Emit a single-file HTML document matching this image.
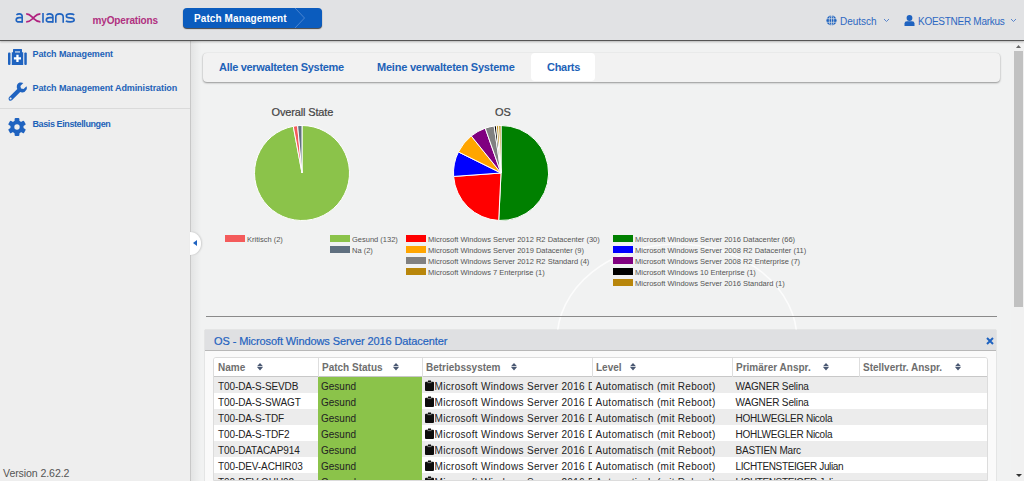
<!DOCTYPE html>
<html><head><meta charset="utf-8">
<style>
*{box-sizing:border-box;margin:0;padding:0}
html,body{width:1024px;height:481px;overflow:hidden;background:#f1f2f2;font-family:"Liberation Sans",sans-serif;position:relative}
.a{position:absolute;white-space:nowrap}
#hdr{position:absolute;left:0;top:0;width:1024px;height:41px;background:#e1e2e4;border-bottom:1px solid #555;box-shadow:0 1px 2px rgba(0,0,0,.25);z-index:5}
#side{position:absolute;left:0;top:40px;width:191px;height:441px;background:#eeeeee;border-right:1px solid #c8c8c8}
#sideshadow{position:absolute;left:191px;top:40px;width:10px;height:441px;background:linear-gradient(to right,rgba(0,0,0,.06),rgba(0,0,0,0))}
.st{position:absolute;left:32.5px;font-size:9px;font-weight:bold;color:#1d62b8;letter-spacing:-0.1px;white-space:nowrap;line-height:11px}
.tab{position:absolute;font-size:11px;font-weight:bold;color:#1d62b8;letter-spacing:-0.3px;white-space:nowrap;line-height:13px}

#tabbar{position:absolute;left:203px;top:53px;width:797px;height:28.5px;background:#f2f2f2;border-radius:4px;box-shadow:0 1px 2px rgba(0,0,0,.38),0 0 1px rgba(0,0,0,.12)}
.ttl{position:absolute;font-size:11px;color:#444;line-height:13px;white-space:nowrap;letter-spacing:-0.15px;-webkit-text-stroke:0.2px #444}
.lg{position:absolute;font-size:7.5px;color:#555;line-height:10px;white-space:nowrap}
#panel{position:absolute;left:205px;top:330px;width:791px;height:151px;background:#fafafa;box-shadow:0 0 1px rgba(0,0,0,.3)}
#phead{position:absolute;left:0;top:0;width:791px;height:21px;background:#dfe0e2;border-bottom:1px solid #b8b8b8}
#table{position:absolute;left:213px;top:357px;width:775px;height:124px;background:#fff;border:1px solid #dcdcdc;border-radius:3px 3px 0 0;overflow:hidden}
#thead{position:absolute;left:0;top:0;width:774px;height:19px;background:#fff;border-bottom:1px solid #c8c8c8}
.hc{position:absolute;top:4px;font-size:10px;font-weight:bold;color:#6e6e6e;line-height:12px;white-space:nowrap}
.row{position:absolute;left:0;width:774px;height:16px}
.c{position:absolute;top:4px;font-size:10px;color:#222;line-height:12px;white-space:nowrap}
.green{position:absolute;left:104px;top:0;width:104px;height:16px;background:#8bc34a}
#handle{position:absolute;left:190px;top:232px;width:11px;height:23px;background:#fff;border-radius:0 12px 12px 0;box-shadow:1px 0 2px rgba(0,0,0,.15)}
#sb{position:absolute;left:1011px;top:41px;width:13px;height:440px;background:#f1f1f1}
#thumb{position:absolute;left:3px;top:10px;width:9px;height:256px;background:#c1c1c1}
</style></head><body>
<div id="hdr">
  <svg class="a" style="left:0;top:0" width="80" height="40" viewBox="0 0 80 40">
    <g fill="none" stroke="#1f63c0" stroke-width="1.6" stroke-linecap="butt">
      <path d="M16.4 14.8Q17.6 13.9 19.3 13.9Q22.2 13.9 22.2 16.6V22.7"/><path d="M22.2 17.6H19.2Q16.2 17.6 16.2 19.9Q16.2 21.9 19.2 21.9H22.2"/>
      <line x1="43" y1="13.1" x2="43" y2="22.7"/>
      <path d="M46.6 14.8Q47.8 13.9 49.5 13.9Q52.9 13.9 52.9 16.6V22.7"/><path d="M52.9 17.6H49.6Q46.3 17.6 46.3 19.9Q46.3 21.9 49.6 21.9H52.9"/>
      <path d="M55.8 22.7V17Q55.8 13.9 59.5 13.9Q63.2 13.9 63.2 17V22.7"/>
      <path d="M74.2 14.9Q73.2 13.9 70 13.9Q66.3 13.9 66.3 15.9Q66.3 17.8 70 17.9Q74.2 18.1 74.2 20.1Q74.2 21.9 70.2 21.9Q67 21.9 65.9 20.9"/>
    </g>
    <g fill="none" stroke="#b0207e" stroke-width="1.7">
      <path d="M26.2 13.9C30 13.9 31 16 33.2 18.1C35.4 20.2 36.5 21.9 40.4 21.9"/><path d="M26.2 21.9C30 21.9 31 20.2 33.2 18.1C35.4 16 36.5 13.9 40.4 13.9"/>
    </g>
  </svg>
  <div class="a" style="left:92.5px;top:15px;font-size:10px;font-weight:bold;color:#b0307f;letter-spacing:-0.15px;line-height:12px">myOperations</div>
  <div class="a" style="left:183px;top:8px;width:139px;height:20px;background:#0b5cbe;border-radius:4px;box-shadow:0 1px 1px rgba(0,0,0,.7)">
    <div class="a" style="left:11px;top:5px;font-size:10px;font-weight:bold;color:#fff;letter-spacing:0.1px;line-height:12px">Patch Management</div>
    <svg class="a" style="left:111px;top:0" width="12" height="20"><path d="M1 0L10.5 10L1 20" fill="none" stroke="#5a8fd6" stroke-width="0.8"/></svg>
  </div>
  <svg class="a" style="left:826px;top:15px" width="11" height="11" viewBox="0 0 11 11">
    <circle cx="5.5" cy="5.5" r="5.1" fill="#1f63c0"/>
    <g stroke="#e1e2e4" stroke-width="0.7" fill="none"><ellipse cx="5.5" cy="5.5" rx="2.2" ry="5"/><line x1="0" y1="3.7" x2="11" y2="3.7"/><line x1="0" y1="7.3" x2="11" y2="7.3"/><line x1="5.5" y1="0" x2="5.5" y2="11"/></g>
  </svg>
  <div class="a" style="left:840px;top:15.5px;font-size:10px;color:#2d68c2;line-height:12px">Deutsch</div>
  <svg class="a" style="left:883px;top:18px" width="7" height="5"><path d="M1 1L3.5 3.5L6 1" fill="none" stroke="#4a7cc8" stroke-width="0.9"/></svg>
  <svg class="a" style="left:904px;top:15px" width="11" height="11" viewBox="0 0 11 11">
    <circle cx="5.5" cy="3" r="2.9" fill="#1f63c0"/><path d="M0.5 11V8.6Q0.5 6.3 3 6.3H8Q10.5 6.3 10.5 8.6V11Z" fill="#1f63c0"/>
  </svg>
  <div class="a" style="left:918px;top:15.5px;font-size:10px;color:#2d68c2;letter-spacing:-0.27px;line-height:12px">KOESTNER Markus</div>
  <svg class="a" style="left:1010px;top:18px" width="7" height="5"><path d="M1 1L3.5 3.5L6 1" fill="none" stroke="#4a7cc8" stroke-width="0.9"/></svg>
</div>
<div id="side">
  <svg class="a" style="left:8px;top:8.7px" width="19" height="16.2" viewBox="0 0 19 16.2">
    <path d="M5 0.6Q5 0 5.6 0H13.4Q14 0 14 0.6V3.3H15.2V16H3.8V3.3H5Z" fill="#1f63c0"/>
    <rect x="7" y="2.4" width="5" height="1.1" fill="#eeeeee"/>
    <rect x="0" y="3.5" width="2.5" height="12.5" rx="1" fill="#1f63c0"/>
    <rect x="16.3" y="3.5" width="2.5" height="12.5" rx="1" fill="#1f63c0"/>
    <path d="M8.3 5.8H10.6V8.2H13V10.5H10.6V12.9H8.3V10.5H5.9V8.2H8.3Z" fill="#fff"/>
  </svg>
  <div class="st" style="top:8.5px">Patch Management</div>
  <svg class="a" style="left:8px;top:41.8px" width="20" height="20" viewBox="0 0 20 20">
    <path d="M18.5 4.2L15.6 7.1L13 6.5L12.4 3.9L15.3 1Q13.5 0 11.6 0.6Q8.6 1.8 8.8 5.3Q8.9 6.3 9.3 7L1.2 15.1Q0 16.4 0.9 17.9Q2.2 19.4 3.9 18.3L12.2 10Q13.3 10.5 14.5 10.4Q17.3 10.2 18.6 7.6Q19.3 5.8 18.5 4.2Z" fill="#1f63c0"/>
    <circle cx="2.6" cy="16.6" r="1" fill="#eeeeee"/>
  </svg>
  <div class="st" style="top:42.5px">Patch Management Administration</div>
  <div class="a" style="left:0;top:68px;width:190px;height:1px;background:#dadada"></div>
  <svg class="a" style="left:8.3px;top:77.8px" width="18" height="18" viewBox="0 0 18 18">
    <g fill="#1f63c0"><circle cx="9" cy="9" r="6.6"/><rect x="6.6" y="0" width="4.8" height="5" rx="1" transform="rotate(0 9 9)"/><rect x="6.6" y="0" width="4.8" height="5" rx="1" transform="rotate(60 9 9)"/><rect x="6.6" y="0" width="4.8" height="5" rx="1" transform="rotate(120 9 9)"/><rect x="6.6" y="0" width="4.8" height="5" rx="1" transform="rotate(180 9 9)"/><rect x="6.6" y="0" width="4.8" height="5" rx="1" transform="rotate(240 9 9)"/><rect x="6.6" y="0" width="4.8" height="5" rx="1" transform="rotate(300 9 9)"/></g>
    <circle cx="9" cy="9" r="2.7" fill="#eeeeee"/>
  </svg>
  <div class="st" style="top:78.5px;letter-spacing:-0.4px">Basis Einstellungen</div>
  <div class="a" style="left:3px;top:427px;font-size:10.6px;color:#555;line-height:12px;letter-spacing:-0.1px">Version 2.62.2</div>
</div>
<div id="sideshadow"></div><svg class="a" style="left:191px;top:41px" width="820" height="440" viewBox="191 41 820 440"><ellipse cx="677" cy="340" rx="120" ry="96" fill="none" stroke="#ffffff" stroke-width="1.6" opacity="0.75"/></svg>
<div id="tabbar"></div>
<div class="a" style="left:531px;top:53px;width:64px;height:28px;background:#fff;border-radius:4px"></div>
<div class="tab" style="left:219px;top:61px">Alle verwalteten Systeme</div>
<div class="tab" style="left:377px;top:61px;letter-spacing:-0.22px">Meine verwalteten Systeme</div>
<div class="tab" style="left:547px;top:61px">Charts</div>
<div class="ttl" style="left:271.5px;top:106px">Overall State</div>
<svg class="a" style="left:251.8px;top:122.8px" width="100" height="100" viewBox="0 0 100 100"><path d="M50 50L50.00 2.50A47.5 47.5 0 1 1 41.27 3.31Z" fill="#8bc34a" stroke="#fff" stroke-width="1" stroke-linejoin="round"/><path d="M50 50L41.27 3.31A47.5 47.5 0 0 1 45.62 2.70Z" fill="#f45b5b" stroke="#fff" stroke-width="1" stroke-linejoin="round"/><path d="M50 50L45.62 2.70A47.5 47.5 0 0 1 50.00 2.50Z" fill="#607080" stroke="#fff" stroke-width="1" stroke-linejoin="round"/></svg>
<div class="ttl" style="left:495px;top:106px">OS</div>
<svg class="a" style="left:450.8px;top:122.8px" width="100" height="100" viewBox="0 0 100 100"><path d="M50 50L50.00 2.50A47.5 47.5 0 1 1 47.71 97.44Z" fill="#008000" stroke="#fff" stroke-width="1" stroke-linejoin="round"/><path d="M50 50L47.71 97.44A47.5 47.5 0 0 1 2.62 53.44Z" fill="#ff0000" stroke="#fff" stroke-width="1" stroke-linejoin="round"/><path d="M50 50L2.62 53.44A47.5 47.5 0 0 1 7.42 28.95Z" fill="#0000ff" stroke="#fff" stroke-width="1" stroke-linejoin="round"/><path d="M50 50L7.42 28.95A47.5 47.5 0 0 1 20.26 12.97Z" fill="#ffa500" stroke="#fff" stroke-width="1" stroke-linejoin="round"/><path d="M50 50L20.26 12.97A47.5 47.5 0 0 1 34.23 5.19Z" fill="#800080" stroke="#fff" stroke-width="1" stroke-linejoin="round"/><path d="M50 50L34.23 5.19A47.5 47.5 0 0 1 43.14 3.00Z" fill="#808080" stroke="#fff" stroke-width="1" stroke-linejoin="round"/><path d="M50 50L43.14 3.00A47.5 47.5 0 0 1 45.42 2.72Z" fill="#000000" stroke="#fff" stroke-width="1" stroke-linejoin="round"/><path d="M50 50L45.42 2.72A47.5 47.5 0 0 1 47.71 2.56Z" fill="#b8860b" stroke="#fff" stroke-width="1" stroke-linejoin="round"/><path d="M50 50L47.71 2.56A47.5 47.5 0 0 1 50.00 2.50Z" fill="#b8860b" stroke="#fff" stroke-width="1" stroke-linejoin="round"/></svg>
<div class="a" style="left:225px;top:235px;width:20px;height:7px;background:#f45b5b"></div><div class="lg" style="left:247px;top:235px">Kritisch (2)</div><div class="a" style="left:330px;top:235px;width:20px;height:7px;background:#8bc34a"></div><div class="lg" style="left:352px;top:235px">Gesund (132)</div><div class="a" style="left:330px;top:246px;width:20px;height:7px;background:#607080"></div><div class="lg" style="left:352px;top:246px">Na (2)</div><div class="a" style="left:406px;top:235px;width:20px;height:7px;background:#ff0000"></div><div class="lg" style="left:428px;top:235px">Microsoft Windows Server 2012 R2 Datacenter (30)</div><div class="a" style="left:406px;top:246px;width:20px;height:7px;background:#ffa500"></div><div class="lg" style="left:428px;top:246px">Microsoft Windows Server 2019 Datacenter (9)</div><div class="a" style="left:406px;top:257px;width:20px;height:7px;background:#808080"></div><div class="lg" style="left:428px;top:257px">Microsoft Windows Server 2012 R2 Standard (4)</div><div class="a" style="left:406px;top:268px;width:20px;height:7px;background:#b8860b"></div><div class="lg" style="left:428px;top:268px">Microsoft Windows 7 Enterprise (1)</div><div class="a" style="left:613px;top:235px;width:20px;height:7px;background:#008000"></div><div class="lg" style="left:635px;top:235px">Microsoft Windows Server 2016 Datacenter (66)</div><div class="a" style="left:613px;top:246px;width:20px;height:7px;background:#0000ff"></div><div class="lg" style="left:635px;top:246px">Microsoft Windows Server 2008 R2 Datacenter (11)</div><div class="a" style="left:613px;top:257px;width:20px;height:7px;background:#800080"></div><div class="lg" style="left:635px;top:257px">Microsoft Windows Server 2008 R2 Enterprise (7)</div><div class="a" style="left:613px;top:268px;width:20px;height:7px;background:#000000"></div><div class="lg" style="left:635px;top:268px">Microsoft Windows 10 Enterprise (1)</div><div class="a" style="left:613px;top:279px;width:20px;height:7px;background:#b8860b"></div><div class="lg" style="left:635px;top:279px">Microsoft Windows Server 2016 Standard (1)</div>
<div class="a" style="left:206px;top:316px;width:791px;height:1px;background:#8a8a8a"></div>
<div id="panel">
  <div id="phead"><span class="a" style="left:9px;top:5px;font-size:11px;color:#1f63c0;letter-spacing:-0.1px;-webkit-text-stroke:0.2px #1f63c0;line-height:13px">OS - Microsoft Windows Server 2016 Datacenter</span>
  <svg class="a" style="left:781px;top:7px" width="8" height="8" viewBox="0 0 8 8"><path d="M1 1L7 7M7 1L1 7" stroke="#1f63c0" stroke-width="2"/></svg></div>
</div>
<div id="table">
  <div id="thead"><span class="hc" style="left:4px">Name</span><svg class="a" style="top:5.3px;left:42.5px" width="6" height="8" viewBox="0 0 6 8"><path d="M3 0L6 3.3H0Z M0 4.1H6L3 7.4Z" fill="#4a5872"/></svg><span class="hc" style="left:108px">Patch Status</span><svg class="a" style="top:5.3px;left:178.5px" width="6" height="8" viewBox="0 0 6 8"><path d="M3 0L6 3.3H0Z M0 4.1H6L3 7.4Z" fill="#4a5872"/></svg><span class="hc" style="left:212px">Betriebssystem</span><svg class="a" style="top:5.3px;left:296.5px" width="6" height="8" viewBox="0 0 6 8"><path d="M3 0L6 3.3H0Z M0 4.1H6L3 7.4Z" fill="#4a5872"/></svg><span class="hc" style="left:382px">Level</span><svg class="a" style="top:5.3px;left:415.5px" width="6" height="8" viewBox="0 0 6 8"><path d="M3 0L6 3.3H0Z M0 4.1H6L3 7.4Z" fill="#4a5872"/></svg><span class="hc" style="left:522px">Primärer Anspr.</span><svg class="a" style="top:5.3px;left:608.5px" width="6" height="8" viewBox="0 0 6 8"><path d="M3 0L6 3.3H0Z M0 4.1H6L3 7.4Z" fill="#4a5872"/></svg><span class="hc" style="left:649px">Stellvertr. Anspr.</span><svg class="a" style="top:5.3px;left:740.5px" width="6" height="8" viewBox="0 0 6 8"><path d="M3 0L6 3.3H0Z M0 4.1H6L3 7.4Z" fill="#4a5872"/></svg><div class="a" style="left:104px;top:0;width:1px;height:19px;background:#dedede"></div><div class="a" style="left:208px;top:0;width:1px;height:19px;background:#dedede"></div><div class="a" style="left:377.5px;top:0;width:1px;height:19px;background:#dedede"></div><div class="a" style="left:518px;top:0;width:1px;height:19px;background:#dedede"></div><div class="a" style="left:645px;top:0;width:1px;height:19px;background:#dedede"></div></div>
  <div class="row" style="top:19px;background:#ececec"><span class="c" style="left:4px;letter-spacing:-0.1px">T00-DA-S-SEVDB</span><span class="green"><span class="c" style="left:3px">Gesund</span></span><svg class="a" style="left:211px;top:3px" width="9" height="11" viewBox="0 0 9 11"><path d="M3 1.8V0.4H6V1.8H8Q9 1.8 9 2.8V10Q9 11 8 11H1Q0 11 0 10V2.8Q0 1.8 1 1.8Z" fill="#0d0d0d"/><rect x="2.5" y="2.2" width="4" height="0.9" fill="#888"/></svg><span class="c" style="left:220.5px;width:157.5px;overflow:hidden;letter-spacing:0.32px">Microsoft Windows Server 2016 Datacenter</span><span class="c" style="left:381.5px;letter-spacing:0.3px">Automatisch (mit Reboot)</span><span class="c" style="left:521.5px;letter-spacing:-0.15px">WAGNER Selina</span></div><div class="row" style="top:35px;background:#ffffff"><span class="c" style="left:4px;letter-spacing:-0.1px">T00-DA-S-SWAGT</span><span class="green"><span class="c" style="left:3px">Gesund</span></span><svg class="a" style="left:211px;top:3px" width="9" height="11" viewBox="0 0 9 11"><path d="M3 1.8V0.4H6V1.8H8Q9 1.8 9 2.8V10Q9 11 8 11H1Q0 11 0 10V2.8Q0 1.8 1 1.8Z" fill="#0d0d0d"/><rect x="2.5" y="2.2" width="4" height="0.9" fill="#888"/></svg><span class="c" style="left:220.5px;width:157.5px;overflow:hidden;letter-spacing:0.32px">Microsoft Windows Server 2016 Datacenter</span><span class="c" style="left:381.5px;letter-spacing:0.3px">Automatisch (mit Reboot)</span><span class="c" style="left:521.5px;letter-spacing:-0.15px">WAGNER Selina</span></div><div class="row" style="top:51px;background:#ececec"><span class="c" style="left:4px;letter-spacing:-0.1px">T00-DA-S-TDF</span><span class="green"><span class="c" style="left:3px">Gesund</span></span><svg class="a" style="left:211px;top:3px" width="9" height="11" viewBox="0 0 9 11"><path d="M3 1.8V0.4H6V1.8H8Q9 1.8 9 2.8V10Q9 11 8 11H1Q0 11 0 10V2.8Q0 1.8 1 1.8Z" fill="#0d0d0d"/><rect x="2.5" y="2.2" width="4" height="0.9" fill="#888"/></svg><span class="c" style="left:220.5px;width:157.5px;overflow:hidden;letter-spacing:0.32px">Microsoft Windows Server 2016 Datacenter</span><span class="c" style="left:381.5px;letter-spacing:0.3px">Automatisch (mit Reboot)</span><span class="c" style="left:521.5px;letter-spacing:-0.25px">HOHLWEGLER Nicola</span></div><div class="row" style="top:67px;background:#ffffff"><span class="c" style="left:4px;letter-spacing:-0.1px">T00-DA-S-TDF2</span><span class="green"><span class="c" style="left:3px">Gesund</span></span><svg class="a" style="left:211px;top:3px" width="9" height="11" viewBox="0 0 9 11"><path d="M3 1.8V0.4H6V1.8H8Q9 1.8 9 2.8V10Q9 11 8 11H1Q0 11 0 10V2.8Q0 1.8 1 1.8Z" fill="#0d0d0d"/><rect x="2.5" y="2.2" width="4" height="0.9" fill="#888"/></svg><span class="c" style="left:220.5px;width:157.5px;overflow:hidden;letter-spacing:0.32px">Microsoft Windows Server 2016 Datacenter</span><span class="c" style="left:381.5px;letter-spacing:0.3px">Automatisch (mit Reboot)</span><span class="c" style="left:521.5px;letter-spacing:-0.25px">HOHLWEGLER Nicola</span></div><div class="row" style="top:83px;background:#ececec"><span class="c" style="left:4px;letter-spacing:-0.1px">T00-DATACAP914</span><span class="green"><span class="c" style="left:3px">Gesund</span></span><svg class="a" style="left:211px;top:3px" width="9" height="11" viewBox="0 0 9 11"><path d="M3 1.8V0.4H6V1.8H8Q9 1.8 9 2.8V10Q9 11 8 11H1Q0 11 0 10V2.8Q0 1.8 1 1.8Z" fill="#0d0d0d"/><rect x="2.5" y="2.2" width="4" height="0.9" fill="#888"/></svg><span class="c" style="left:220.5px;width:157.5px;overflow:hidden;letter-spacing:0.32px">Microsoft Windows Server 2016 Datacenter</span><span class="c" style="left:381.5px;letter-spacing:0.3px">Automatisch (mit Reboot)</span><span class="c" style="left:521.5px;letter-spacing:-0.2px">BASTIEN Marc</span></div><div class="row" style="top:99px;background:#ffffff"><span class="c" style="left:4px;letter-spacing:-0.1px">T00-DEV-ACHIR03</span><span class="green"><span class="c" style="left:3px">Gesund</span></span><svg class="a" style="left:211px;top:3px" width="9" height="11" viewBox="0 0 9 11"><path d="M3 1.8V0.4H6V1.8H8Q9 1.8 9 2.8V10Q9 11 8 11H1Q0 11 0 10V2.8Q0 1.8 1 1.8Z" fill="#0d0d0d"/><rect x="2.5" y="2.2" width="4" height="0.9" fill="#888"/></svg><span class="c" style="left:220.5px;width:157.5px;overflow:hidden;letter-spacing:0.32px">Microsoft Windows Server 2016 Datacenter</span><span class="c" style="left:381.5px;letter-spacing:0.3px">Automatisch (mit Reboot)</span><span class="c" style="left:521.5px;letter-spacing:-0.38px">LICHTENSTEIGER Julian</span></div><div class="row" style="top:115px;background:#ececec"><span class="c" style="left:4px;letter-spacing:-0.1px">T00-DEV-GHU02</span><span class="green"><span class="c" style="left:3px">Gesund</span></span><svg class="a" style="left:211px;top:3px" width="9" height="11" viewBox="0 0 9 11"><path d="M3 1.8V0.4H6V1.8H8Q9 1.8 9 2.8V10Q9 11 8 11H1Q0 11 0 10V2.8Q0 1.8 1 1.8Z" fill="#0d0d0d"/><rect x="2.5" y="2.2" width="4" height="0.9" fill="#888"/></svg><span class="c" style="left:220.5px;width:157.5px;overflow:hidden;letter-spacing:0.32px">Microsoft Windows Server 2016 Datacenter</span><span class="c" style="left:381.5px;letter-spacing:0.3px">Automatisch (mit Reboot)</span><span class="c" style="left:521.5px;letter-spacing:-0.38px">LICHTENSTEIGER Julian</span></div>
</div>
<div id="handle"><svg class="a" style="left:3px;top:7.5px" width="4" height="6"><path d="M4 0V6L0 3Z" fill="#1f63c0"/></svg></div>
<div id="sb"><div id="thumb"></div>
<svg class="a" style="left:5px;top:3.5px" width="5" height="3"><path d="M2.5 0L5 3H0Z" fill="#666"/></svg>
<svg class="a" style="left:4.5px;top:432.5px" width="6" height="3"><path d="M0 0H6L3 3Z" fill="#333"/></svg></div>

</body></html>
